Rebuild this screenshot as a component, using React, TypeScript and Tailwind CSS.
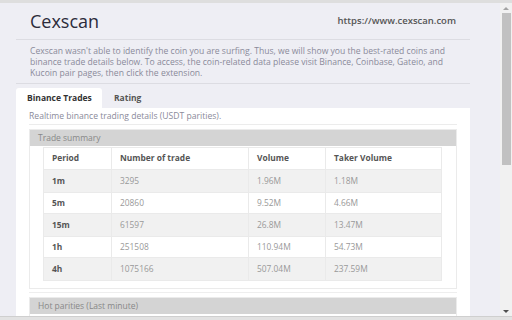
import React from "react";

const rows = [
  ["1m", "3295", "1.96M", "1.18M"],
  ["5m", "20860", "9.52M", "4.66M"],
  ["15m", "61597", "26.8M", "13.47M"],
  ["1h", "251508", "110.94M", "54.73M"],
  ["4h", "1075166", "507.04M", "237.59M"],
];

export default function App() {
  return (
    <div
      className="w-[512px] h-[320px] overflow-hidden bg-[#eeeef4] flex flex-col"
      style={{ fontFamily: '"Open Sans", "Noto Sans", sans-serif' }}
    >
      <div className="h-[3px] bg-[#dedede] shrink-0" />
      <div className="flex flex-1 min-h-0">
        <div className="flex-1 min-w-0 pl-[16px] pr-[30px] overflow-hidden">
          <div className="flex items-center justify-between px-[14px] h-[36px]">
            <div className="text-[18px] text-[#2b2b3b] leading-none">Cexscan</div>
            <div className="text-[9.5px] font-semibold text-[#555]">https://www.cexscan.com</div>
          </div>
          <div className="border-t border-[#dcdce2]" />
          <div className="px-[14px] pt-[6px] pb-[4px] text-[8.6px] leading-[11px] text-[#8a8a9a]">
            Cexscan wasn't able to identify the coin you are surfing. Thus, we will show you the best-rated coins and binance trade details below. To access, the coin-related data please visit Binance, Coinbase, Gateio, and Kucoin pair pages, then click the extension.
          </div>
          <div className="border-t border-[#dcdce2]" />
          <div className="flex mt-[4px] h-[20px]">
            <div className="w-[86px] bg-white rounded-t-[3px] flex items-center pl-[11px] text-[8.5px] font-bold text-[#333]">
              Binance Trades
            </div>
            <div className="pl-[12px] flex items-center text-[8.5px] font-bold text-[#555]">Rating</div>
          </div>
          <div className="bg-white px-[13px] pb-[8px]">
            <div className="h-[17px] flex items-center text-[8.6px] text-[#8a8a9a] border-b border-[#ececec]">
              Realtime binance trading details (USDT parities).
            </div>
            <div className="mt-[4px] border border-[#ebebeb]">
              <div className="h-[16px] bg-[#d4d4d4] flex items-center pl-[8px] text-[8.5px] text-[#888]">Trade summary</div>
              <div className="px-[13px] pt-[1px] pb-[7px]">
                <table className="w-[399px] border-collapse text-[8.4px]">
                  <thead>
                    <tr className="h-[22px] bg-white">
                      <th className="w-[68px] text-left pl-[8px] font-bold text-[#555] border border-[#eaeaea]">Period</th>
                      <th className="w-[137px] text-left pl-[8px] font-bold text-[#555] border border-[#eaeaea]">Number of trade</th>
                      <th className="w-[77px] text-left pl-[8px] font-bold text-[#555] border border-[#eaeaea]">Volume</th>
                      <th className="text-left pl-[8px] font-bold text-[#555] border border-[#eaeaea]">Taker Volume</th>
                    </tr>
                  </thead>
                  <tbody>
                    {rows.map((r, i) => (
                      <tr key={r[0]} className={i % 2 === 0 ? "h-[23px] bg-[#f1f1f1]" : "h-[21px] bg-white"}>
                        <td className="pl-[8px] font-bold text-[#555] border border-[#eaeaea]">{r[0]}</td>
                        <td className="pl-[8px] text-[#999] border border-[#eaeaea]">{r[1]}</td>
                        <td className="pl-[8px] text-[#999] border border-[#eaeaea]">{r[2]}</td>
                        <td className="pl-[8px] text-[#999] border border-[#eaeaea]">{r[3]}</td>
                      </tr>
                    ))}
                  </tbody>
                </table>
              </div>
            </div>
            <div className="mt-[3px] border-t border-[#eeeeee]" />
            <div className="mt-[4px] border border-[#ebebeb]">
              <div className="h-[16px] bg-[#d4d4d4] flex items-center pl-[8px] text-[8.5px] text-[#888]">Hot parities (Last minute)</div>
              <div className="h-[20px]" />
            </div>
          </div>
        </div>
        <div className="w-[12px] shrink-0 bg-[#f1f1f1] flex flex-col items-center">
          <div className="h-[10px] flex items-center justify-center">
            <div className="w-0 h-0 border-l-[3px] border-r-[3px] border-b-[3px] border-l-transparent border-r-transparent border-b-[#a3a3a3]" />
          </div>
          <div className="w-[9px] h-[152px] bg-[#c1c1c1]" />
          <div className="flex-1" />
          <div className="h-[10px] flex items-center justify-center">
            <div className="w-0 h-0 border-l-[3px] border-r-[3px] border-t-[3px] border-l-transparent border-r-transparent border-t-[#505050]" />
          </div>
        </div>
      </div>
      <div className="h-[4px] bg-[#e2e2e2] border-t border-[#cfcfcf] shrink-0" />
    </div>
  );
}
